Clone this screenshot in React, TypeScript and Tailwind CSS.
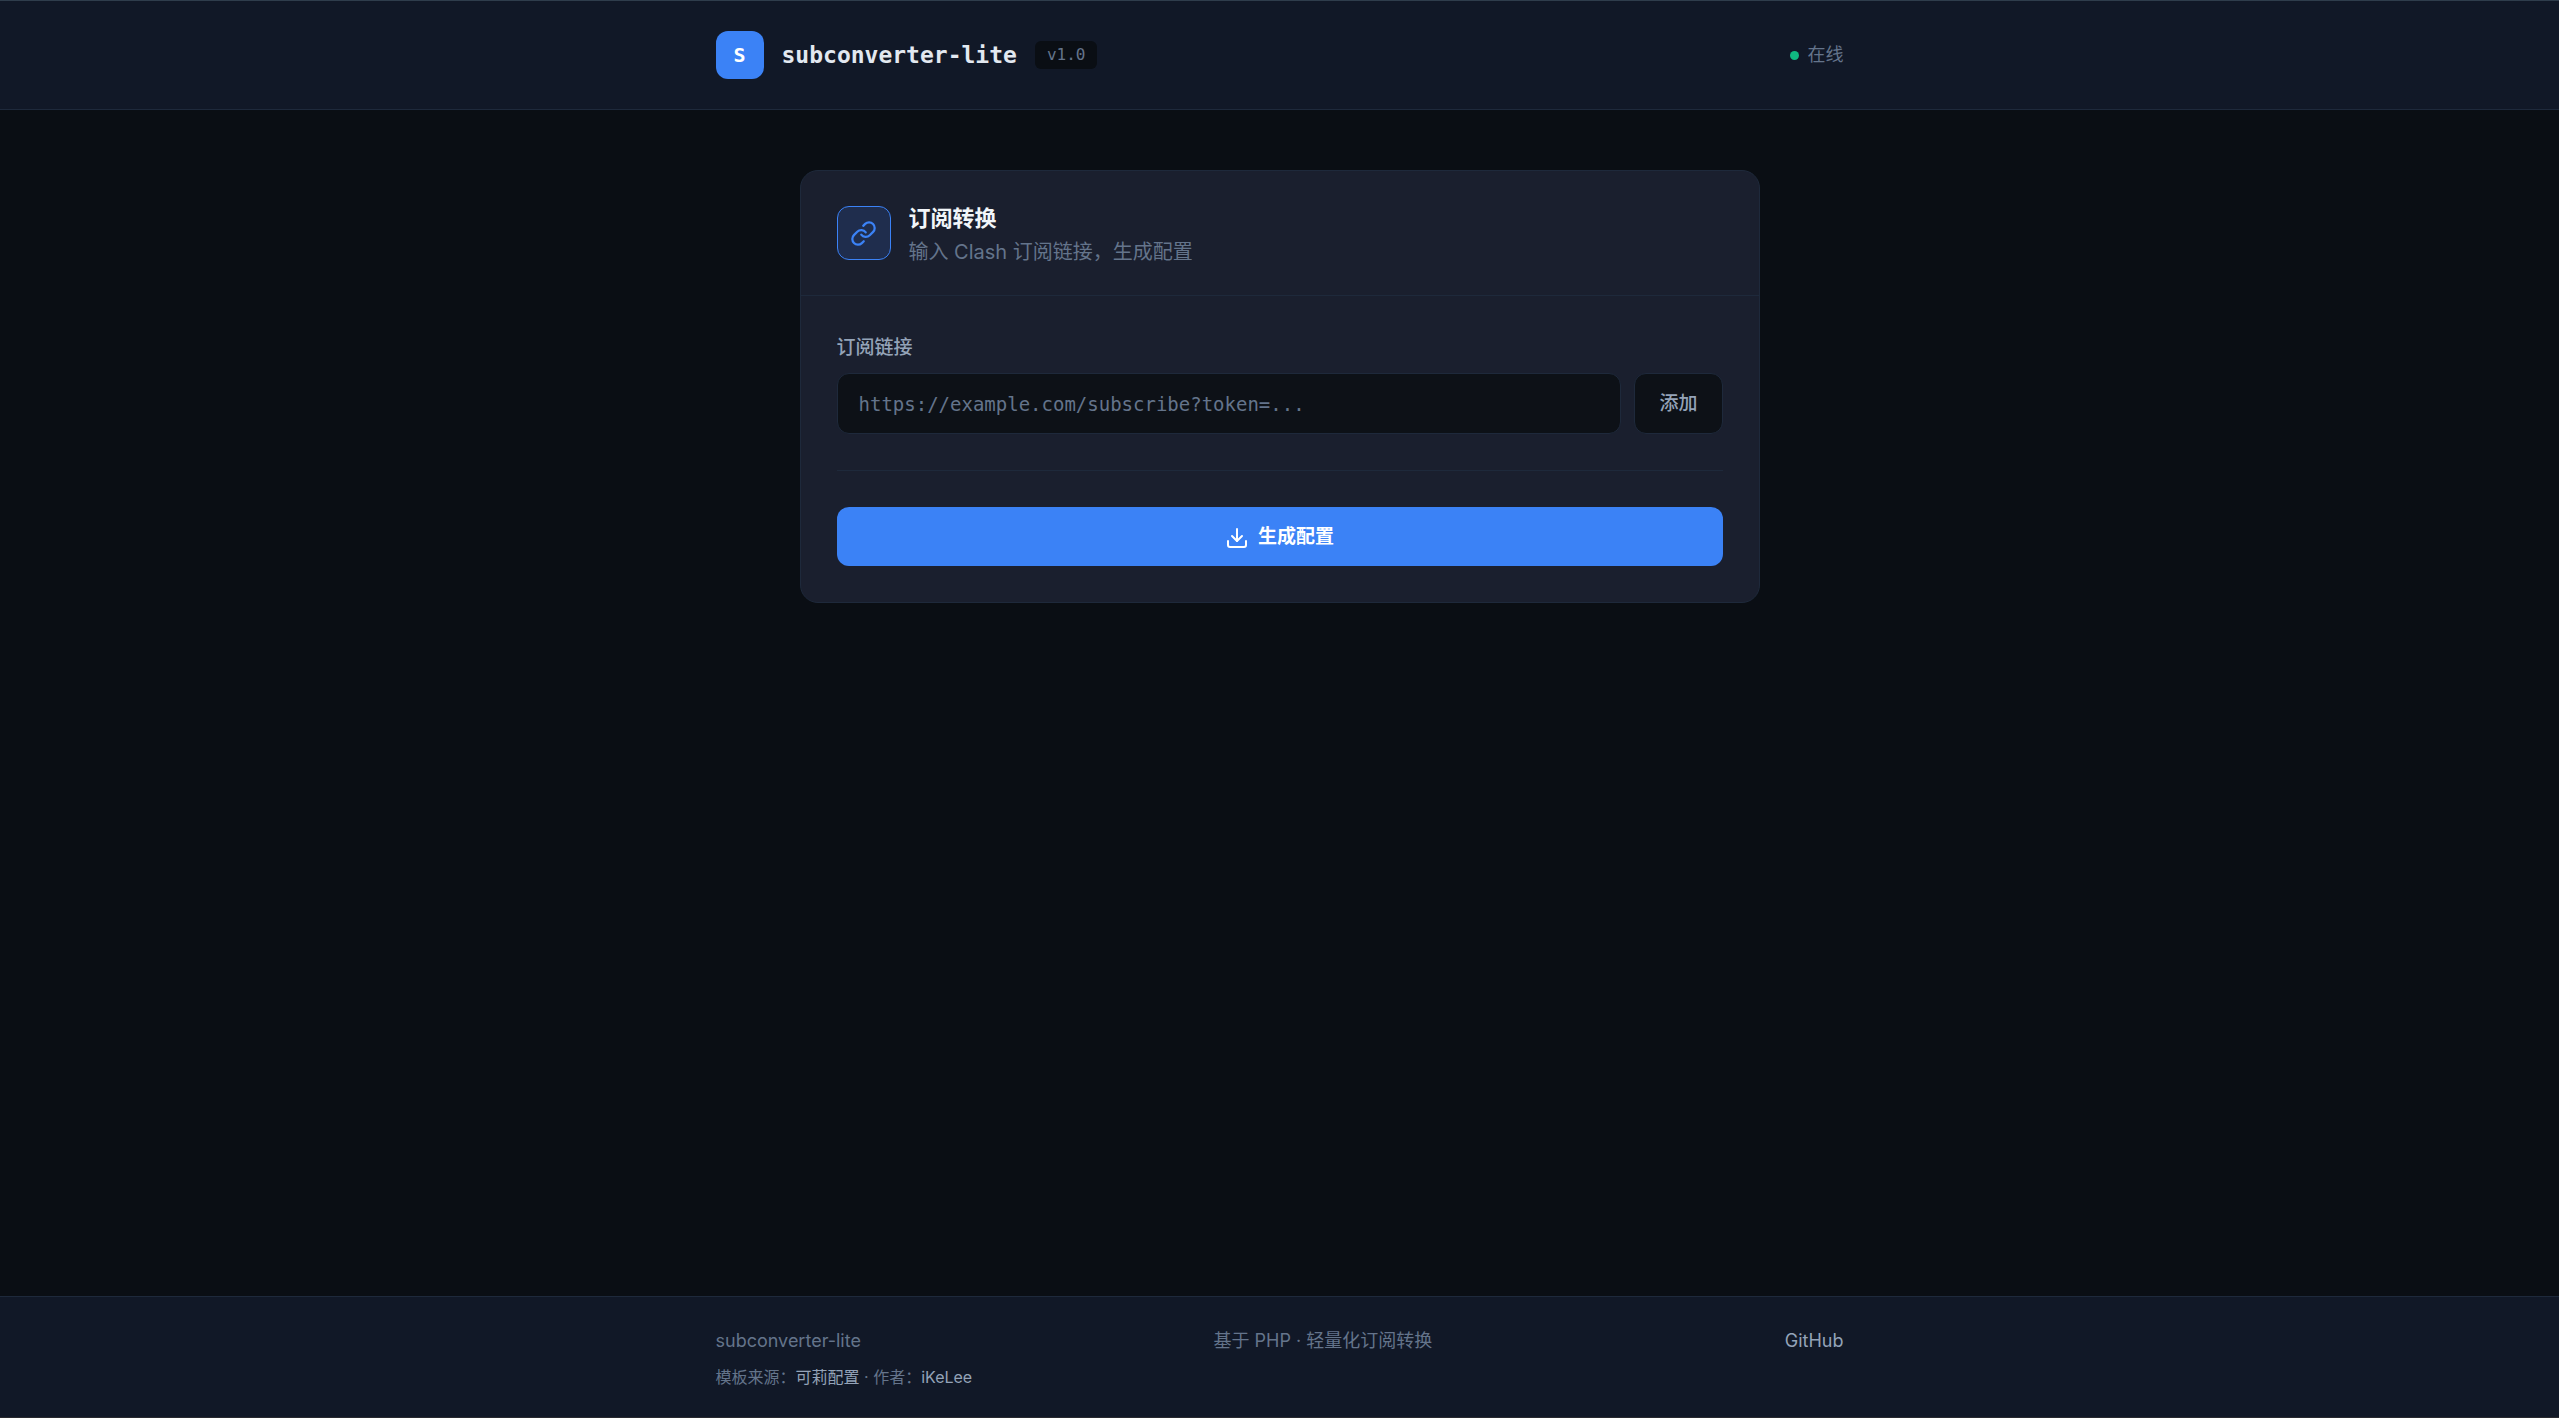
import React from "react";
import { Download, Link } from "lucide-react";

type FooterLinkProps = {
  href: string;
  children: React.ReactNode;
};

function FooterLink({ href, children }: FooterLinkProps) {
  return (
    <a href={href} className="text-[#94a3b8] hover:text-[#3b82f6]">
      {children}
    </a>
  );
}

function Header() {
  return (
    <header className="border-y border-b-[#1e293b] border-t-[#2f3d4c] bg-[#111827]">
      <div className="mx-auto flex w-full max-w-[1200px] items-center justify-between px-9 py-[30px]">
        <div className="flex items-center gap-[18px] font-['DejaVu_Sans_Mono',monospace]">
          <div className="flex size-12 items-center justify-center rounded-xl bg-[#3b82f6] text-[20px] font-bold text-white">
            S
          </div>
          <h1 className="text-[23px] leading-7 font-bold text-[#e2e8f0]">subconverter-lite</h1>
          <span className="rounded-md bg-[#0a0e14] px-3 text-[16px] leading-7 text-[#64748b]">v1.0</span>
        </div>
        <div className="flex items-center gap-[9px] text-[18px] leading-7 text-[#64748b]">
          <span className="size-[9px] rounded-full bg-[#10b981]" />
          在线
        </div>
      </div>
    </header>
  );
}

function ConverterCard() {
  return (
    <section className="mx-auto w-full max-w-[960px] rounded-[18px] border border-[#1e293b] bg-[#1a1f2e]">
      <div className="flex items-center gap-[18px] border-b border-[#1e293b] px-9 py-[35px]">
        <div className="flex size-[54px] shrink-0 items-center justify-center rounded-xl border border-[#3b82f6] bg-[#1f2d4d] text-[#3b82f6]">
          <Link size={27} />
        </div>
        <div className="-my-2 pt-0.5">
          <h2 className="text-[22px] leading-9 font-bold text-[#f1f5f9]">订阅转换</h2>
          <p className="text-[20px] leading-8 text-[#64748b]">输入 Clash 订阅链接，生成配置</p>
        </div>
      </div>

      <form className="p-9" onSubmit={(e) => e.preventDefault()}>
        <label htmlFor="sub-url" className="block pb-2.5 text-[19px] leading-[31px] font-medium text-[#94a3b8]">
          订阅链接
        </label>
        <div className="flex gap-[13px]">
          <input
            id="sub-url"
            type="url"
            placeholder="https://example.com/subscribe?token=..."
            className="h-[61px] min-w-0 flex-1 rounded-xl border border-[#1e293b] bg-[#0d1117] px-[21px] font-['DejaVu_Sans_Mono',monospace] text-[19px] text-[#e2e8f0] placeholder:text-[#64748b] focus:border-[#3b82f6] focus:outline-none"
          />
          <button
            type="button"
            className="h-[61px] rounded-xl border border-[#1e293b] bg-[#0d1117] px-6 pt-0.5 text-[19px] font-medium text-[#94a3b8]"
          >
            添加
          </button>
        </div>

        <div className="mt-9 border-t border-[#1e293b] pt-9">
          <button
            type="submit"
            className="flex h-[59px] w-full items-center justify-center gap-[9px] rounded-xl bg-[#3b82f6] pt-0.5 text-[19px] font-bold text-white"
          >
            <Download size={24} />
            生成配置
          </button>
        </div>
      </form>
    </section>
  );
}

function Footer() {
  return (
    <footer className="border-y border-b-[#2a2a30] border-t-[#1e293b] bg-[#111827] text-[#64748b]">
      <div className="mx-auto w-full max-w-[1200px] px-9 pt-[30px] pb-[26px] leading-7">
        <div className="flex items-center justify-between text-[18px] leading-7">
          <p>subconverter-lite</p>
          <p>基于 PHP · 轻量化订阅转换</p>
          <FooterLink href="#github">GitHub</FooterLink>
        </div>
        <p className="mt-2 text-[16px] leading-7">
          模板来源：<FooterLink href="#template">可莉配置</FooterLink> · 作者：
          <FooterLink href="#author">iKeLee</FooterLink>
        </p>
      </div>
    </footer>
  );
}

export default function App() {
  return (
    <div className="flex min-h-screen flex-col bg-[#0a0e14] font-[Inter,'Noto_Sans_CJK_SC',sans-serif]">
      <Header />
      <main className="flex-1 px-9 py-[60px]">
        <ConverterCard />
      </main>
      <Footer />
    </div>
  );
}
